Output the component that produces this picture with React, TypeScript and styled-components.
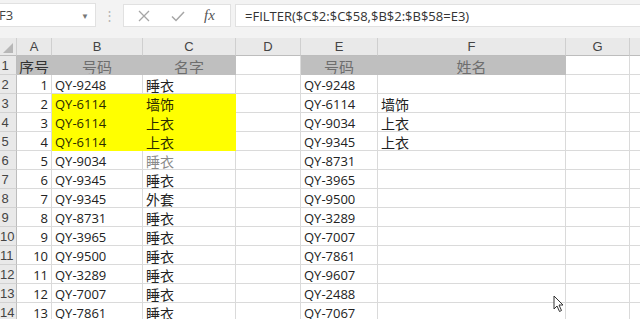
import styled, { createGlobalStyle } from "styled-components";

const GlobalStyle = createGlobalStyle`
  html, body {
    margin: 0;
    padding: 0;
    background: #ffffff;
    overflow: hidden;
  }
`

const LATIN = `"Open Sans", "Liberation Sans", "Noto Sans CJK SC", sans-serif`
const CJK = `"Noto Sans CJK SC", "Noto Sans", sans-serif`

const Page = styled.div`
  width: 640px;
  height: 319px;
  overflow: hidden;
  position: relative;
  background: #ffffff;
  font-family: ${LATIN};
`

const FormulaRow = styled.div`
  display: flex;
  align-items: stretch;
  height: 38px;
  padding-top: 3px;
  padding-bottom: 11px;
  box-sizing: border-box;
  background: #f3f3f3;
`

const NameBox = styled.div`
  width: 97px;
  display: flex;
  align-items: center;
  justify-content: space-between;
  background: #ffffff;
  border: 1px solid #e1e1e1;
  border-left: none;
  box-sizing: border-box;
  font-size: 13px;
  color: #444;
  padding-right: 6px;
  margin-left: -1px;
`

const Caret = styled.span`
  font-size: 8px;
  color: #777;
`

const Dots = styled.div`
  width: 27px;
  display: flex;
  align-items: center;
  justify-content: center;
  color: #b5b5b5;
  font-size: 13px;
`

const FxBox = styled.div`
  width: 108px;
  display: flex;
  align-items: center;
  justify-content: space-around;
  background: #ffffff;
  border: 1px solid #e1e1e1;
  box-sizing: border-box;
  padding: 0 6px 0 4px;
  margin-top: 1px;
`

const FxLabel = styled.span`
  font-family: "Liberation Serif", "DejaVu Serif", serif;
  font-style: italic;
  font-size: 15px;
  color: #555;
`

const FormulaInput = styled.div`
  flex: 1;
  margin-left: 4px;
  display: flex;
  align-items: center;
  background: #ffffff;
  border: 1px solid #e1e1e1;
  border-right: none;
  box-sizing: border-box;
  margin-top: 1px;
  padding-left: 9px;
  font-size: 13px;
  color: #333;
`

const Sheet = styled.div`
  display: grid;
  grid-template-columns: 17px 35px 91px 93px 65px 77px 188px 64px 30px;
  grid-auto-rows: 19px;
  grid-template-rows: 18px;
`

const ColHead = styled.div`
  background: #e9e9e9;
  border-right: 1px solid #cfcfcf;
  border-bottom: 1px solid #bdbdbd;
  box-sizing: border-box;
  display: flex;
  align-items: center;
  justify-content: center;
  font-family: "Liberation Sans", sans-serif;
  font-size: 13px;
  color: #444;
`

const Corner = styled.div`
  width: 0;
  height: 0;
  border-left: 10px solid transparent;
  border-bottom: 10px solid #b7b7b7;
  margin-top: 2px;
`

const RowHead = styled.div`
  background: #e9e9e9;
  border-right: 1px solid #bdbdbd;
  border-bottom: 1px solid #d2d2d2;
  box-sizing: border-box;
  font-family: "Liberation Sans", sans-serif;
  font-size: 13px;
  color: #444;
  display: flex;
  align-items: center;
  padding-top: 1px;
  overflow: hidden;
`

const RowNum = styled.span`
  width: 10px;
  text-align: center;
  flex-shrink: 0;
  white-space: nowrap;
`

const Cell = styled.div<{ $fill?: string; $align?: string; $color?: string; $cjk?: boolean; $head?: boolean }>`
  background: ${p => p.$fill || "#ffffff"};
  border-right: 1px solid ${p => p.$fill || "#dadada"};
  border-bottom: 1px solid ${p => p.$fill || "#dadada"};
  box-sizing: border-box;
  display: flex;
  align-items: center;
  justify-content: ${p => p.$align || "flex-start"};
  padding: 2px 3px 0 3px;
  font-family: ${p => (p.$cjk ? CJK : LATIN)};
  font-size: ${p => (p.$head ? "15px" : p.$cjk ? "14px" : "13px")};
  color: ${p => p.$color || "#222"};
  white-space: nowrap;
  overflow: hidden;
  line-height: 1;
`

const Cursor = styled.svg`
  position: absolute;
  left: 553px;
  top: 295px;
`

const GRAY = "#bfbfbf"
const YELLOW = "#ffff00"

const colLetters = ["A", "B", "C", "D", "E", "F", "G", ""]

const codesB = ["QY-9248", "QY-6114", "QY-6114", "QY-6114", "QY-9034", "QY-9345", "QY-9345", "QY-8731", "QY-3965", "QY-9500", "QY-3289", "QY-7007", "QY-7861"]
const namesC = ["睡衣", "墙饰", "上衣", "上衣", "睡衣", "睡衣", "外套", "睡衣", "睡衣", "睡衣", "睡衣", "睡衣", "睡衣"]
const codesE = ["QY-9248", "QY-6114", "QY-9034", "QY-9345", "QY-8731", "QY-3965", "QY-9500", "QY-3289", "QY-7007", "QY-7861", "QY-9607", "QY-2488", "QY-7067"]
const namesF = ["", "墙饰", "上衣", "上衣"]

const App = () => {
  return (
    <Page>
      <GlobalStyle />
      <FormulaRow>
        <NameBox>
          <span>F3</span>
          <Caret>▼</Caret>
        </NameBox>
        <Dots>⋮</Dots>
        <FxBox>
          <svg width="14" height="14" viewBox="0 0 14 14">
            <path d="M2 2 L12 12 M12 2 L2 12" stroke="#a6a6a6" strokeWidth="1.3" fill="none" />
          </svg>
          <svg width="16" height="14" viewBox="0 0 16 14">
            <path d="M2 7.5 L6 11.5 L14 3" stroke="#a6a6a6" strokeWidth="1.5" fill="none" />
          </svg>
          <FxLabel>fx</FxLabel>
        </FxBox>
        <FormulaInput>=FILTER($C$2:$C$58,$B$2:$B$58=E3)</FormulaInput>
      </FormulaRow>

      <Sheet>
        <ColHead><Corner /></ColHead>
        {colLetters.map((c, i) => (
          <ColHead key={i}>{c}</ColHead>
        ))}

        <RowHead><RowNum>1</RowNum></RowHead>
        <Cell $fill={GRAY} $cjk $head $align="center" $color="#333">序号</Cell>
        <Cell $fill={GRAY} $cjk $head $align="center" $color="#6e6e6e">号码</Cell>
        <Cell $fill={GRAY} $cjk $head $align="center" $color="#6e6e6e">名字</Cell>
        <Cell />
        <Cell $fill={GRAY} $cjk $head $align="center" $color="#6e6e6e">号码</Cell>
        <Cell $fill={GRAY} $cjk $head $align="center" $color="#6e6e6e">姓名</Cell>
        <Cell />
        <Cell />

        {codesB.map((code, i) => {
          const hl = i >= 1 && i <= 3 ? YELLOW : undefined
          return [
            <RowHead key={`h${i}`}><RowNum>{i + 2}</RowNum></RowHead>,
            <Cell key={`a${i}`} $align="flex-end">{i + 1}</Cell>,
            <Cell key={`b${i}`} $fill={hl} $color={hl ? "#2b2b00" : undefined}>{code}</Cell>,
            <Cell key={`c${i}`} $fill={hl} $cjk $color={i === 4 ? "#8a8a8a" : hl ? "#2b2b00" : undefined}>{namesC[i]}</Cell>,
            <Cell key={`d${i}`} />,
            <Cell key={`e${i}`}>{codesE[i]}</Cell>,
            <Cell key={`f${i}`} $cjk>{namesF[i] || ""}</Cell>,
            <Cell key={`g${i}`} />,
            <Cell key={`x${i}`} />,
          ]
        })}
      </Sheet>

      <Cursor width="12" height="18" viewBox="0 0 12 18">
        <path d="M1 1 L1 14 L4 11 L6.5 16.5 L8.5 15.5 L6 10 L10 10 Z" fill="#ffffff" stroke="#333" strokeWidth="1" strokeLinejoin="round" />
      </Cursor>
    </Page>
  )
}

export default App;
